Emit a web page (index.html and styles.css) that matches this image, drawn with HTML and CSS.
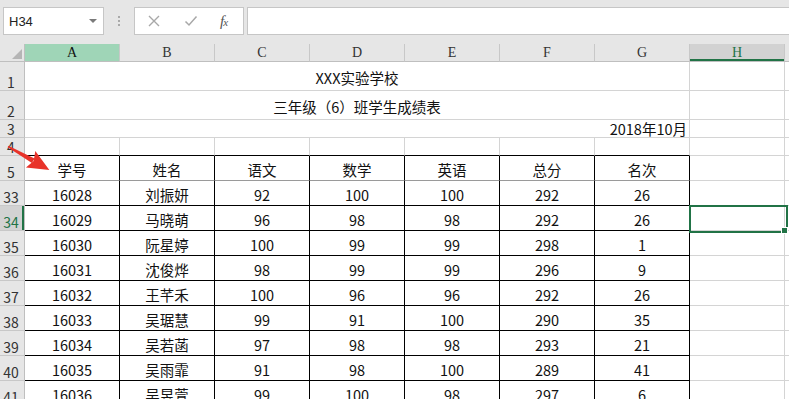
FILE: index.html
```html
<!DOCTYPE html>
<html lang="zh-CN">
<head>
<meta charset="utf-8">
<title>成绩表</title>
<link rel="stylesheet" href="styles.css">
</head>
<body>
<div class="app">
  <header class="bar">
    <div class="namebox"><span class="ref">H34</span><span class="dd"></span></div>
    <div class="grip"><i></i><i></i><i></i></div>
    <div class="btns">
      <svg class="ico" width="14" height="14" viewBox="0 0 14 14"><path d="M2 2 L12 12 M12 2 L2 12" stroke="#a8a8a8" stroke-width="1.4" fill="none"/></svg>
      <svg class="ico" width="14" height="14" viewBox="0 0 14 14"><path d="M1.5 7.5 L5 11 L12.5 2.5" stroke="#a8a8a8" stroke-width="1.5" fill="none"/></svg>
      <span class="fx">f<span class="fxs">x</span></span>
    </div>
    <div class="formula"></div>
  </header>

  <div class="sheet">
    <div class="corner"><i class="tri"></i></div>
    <div class="ch cha">A</div><div class="ch">B</div><div class="ch">C</div><div class="ch">D</div><div class="ch">E</div><div class="ch">F</div><div class="ch">G</div><div class="ch act">H</div><div class="ch last"></div>

    <div class="rh">1</div><div class="c m ttl">XXX实验学校</div><div class="c"></div><div class="c last"></div>
    <div class="rh">2</div><div class="c m ttl">三年级（6）班学生成绩表</div><div class="c"></div><div class="c last"></div>
    <div class="rh">3</div><div class="c m date">2018年10月</div><div class="c"></div><div class="c last"></div>

    <div class="rh">4</div><div class="c r4"></div><div class="c r4"></div><div class="c r4"></div><div class="c r4"></div><div class="c r4"></div><div class="c r4"></div><div class="c r4"></div><div class="c"></div><div class="c last"></div>

    <div class="rh">5</div><div class="c t hd">学号</div><div class="c t hd">姓名</div><div class="c t hd">语文</div><div class="c t hd">数学</div><div class="c t hd">英语</div><div class="c t hd">总分</div><div class="c t hd">名次</div><div class="c"></div><div class="c last"></div>

    <div class="rh">33</div><div class="c t">16028</div><div class="c t">刘振妍</div><div class="c t">92</div><div class="c t">100</div><div class="c t">100</div><div class="c t">292</div><div class="c t">26</div><div class="c"></div><div class="c last"></div>
    <div class="rh act">34</div><div class="c t">16029</div><div class="c t">马晓萌</div><div class="c t">96</div><div class="c t">98</div><div class="c t">98</div><div class="c t">292</div><div class="c t">26</div><div class="c selc"><div class="selbox"></div><div class="handle"></div></div><div class="c last"></div>
    <div class="rh">35</div><div class="c t">16030</div><div class="c t">阮星婷</div><div class="c t">100</div><div class="c t">99</div><div class="c t">99</div><div class="c t">298</div><div class="c t">1</div><div class="c"></div><div class="c last"></div>
    <div class="rh">36</div><div class="c t">16031</div><div class="c t">沈俊烨</div><div class="c t">98</div><div class="c t">99</div><div class="c t">99</div><div class="c t">296</div><div class="c t">9</div><div class="c"></div><div class="c last"></div>
    <div class="rh">37</div><div class="c t">16032</div><div class="c t">王芊禾</div><div class="c t">100</div><div class="c t">96</div><div class="c t">96</div><div class="c t">292</div><div class="c t">26</div><div class="c"></div><div class="c last"></div>
    <div class="rh">38</div><div class="c t">16033</div><div class="c t">吴琚慧</div><div class="c t">99</div><div class="c t">91</div><div class="c t">100</div><div class="c t">290</div><div class="c t">35</div><div class="c"></div><div class="c last"></div>
    <div class="rh">39</div><div class="c t">16034</div><div class="c t">吴若菡</div><div class="c t">97</div><div class="c t">98</div><div class="c t">98</div><div class="c t">293</div><div class="c t">21</div><div class="c"></div><div class="c last"></div>
    <div class="rh">40</div><div class="c t">16035</div><div class="c t">吴雨霏</div><div class="c t">91</div><div class="c t">98</div><div class="c t">100</div><div class="c t">289</div><div class="c t">41</div><div class="c"></div><div class="c last"></div>
    <div class="rh">41</div><div class="c t">16036</div><div class="c t">吴昱萱</div><div class="c t">99</div><div class="c t">100</div><div class="c t">98</div><div class="c t">297</div><div class="c t">6</div><div class="c"></div><div class="c last"></div>
  </div>

  <svg class="arrow" width="789" height="399" viewBox="0 0 789 399">
    <g transform="translate(8 146.5) rotate(29.5)">
      <polygon points="0,-0.8 29,-2.6 29,2.6 0,0.8" fill="#e8332a"/>
      <polygon points="26,-9.5 47.5,0 26,9.5 29.5,0" fill="#e8332a"/>
    </g>
  </svg>
</div>
</body>
</html>
```

FILE: styles.css
```css
html, body {
  margin: 0;
  padding: 0;
}
body {
  width: 789px;
  height: 399px;
  overflow: hidden;
  background: #ffffff;
  font-family: "Noto Sans CJK SC", "Noto Sans", sans-serif;
}
.app {
  position: relative;
  width: 789px;
  height: 399px;
  overflow: hidden;
}

/* ---------- formula bar ---------- */
.bar {
  height: 44px;
  box-sizing: border-box;
  padding-top: 7px;
  background: #e6e6e6;
  display: flex;
  align-items: flex-start;
}
.namebox {
  margin-left: 3px;
  width: 101px;
  height: 28px;
  box-sizing: border-box;
  background: #ffffff;
  border: 1px solid #c6c6c6;
  display: flex;
  align-items: center;
  justify-content: space-between;
  padding: 0 6px 0 5px;
  font: 13px "Liberation Sans", Arial, sans-serif;
  color: #222222;
}
.dd {
  width: 0;
  height: 0;
  border-left: 4px solid transparent;
  border-right: 4px solid transparent;
  border-top: 4px solid #7a7a7a;
}
.grip {
  margin-left: 14px;
  padding-top: 9px;
  width: 2px;
  display: flex;
  flex-direction: column;
  gap: 2px;
}
.grip i {
  display: block;
  width: 2px;
  height: 2px;
  background: #a9a9a9;
}
.btns {
  margin-left: 14px;
  width: 110px;
  height: 28px;
  box-sizing: border-box;
  background: #ffffff;
  border: 1px solid #c6c6c6;
  display: flex;
  align-items: center;
  padding-left: 12px;
  gap: 23px;
}
.ico {
  display: block;
}
.fx {
  font: italic 15px "Liberation Serif", serif;
  color: #555555;
  margin-left: -1px;
  letter-spacing: -1px;
}
.fxs {
  font-size: 11px;
}
.formula {
  margin-left: 3px;
  flex: 1;
  height: 28px;
  box-sizing: border-box;
  background: #ffffff;
  border: 1px solid #c6c6c6;
  border-right: none;
}

/* ---------- sheet grid ---------- */
.sheet {
  display: grid;
  grid-template-columns: 25px repeat(8, 95px) 1fr;
  grid-template-rows: 18px 29px 29px 18px 18px 25px repeat(9, 25px);
}
.sheet > div {
  box-sizing: border-box;
  min-width: 0;
}
.corner {
  position: relative;
  background: #e6e6e6;
  border-right: 1px solid #bfbfbf;
  border-bottom: 1px solid #bfbfbf;
}
.tri {
  position: absolute;
  right: 2px;
  bottom: 2px;
  width: 10px;
  height: 10px;
  background: #b5b5b5;
  clip-path: polygon(100% 0, 100% 100%, 0 100%);
}
.ch {
  background: #e6e6e6;
  border-right: 1px solid #c8c8c8;
  border-bottom: 1px solid #bfbfbf;
  display: flex;
  align-items: center;
  justify-content: center;
  font: 14px "Liberation Serif", serif;
  color: #333333;
}
.ch.cha {
  background: #9fd5b7;
  color: #111111;
}
.ch.act {
  background: #d2d2d2;
  color: #217346;
  box-shadow: inset 0 -2px 0 #217346;
}
.ch.last {
  border-right: none;
}
.rh {
  background: #e6e6e6;
  border-right: 1px solid #bfbfbf;
  border-bottom: 1px solid #c8c8c8;
  display: flex;
  align-items: flex-end;
  justify-content: center;
  padding-right: 2px;
  padding-bottom: 1px;
  font-size: 14px;
  line-height: 14px;
  color: #333333;
}
.rh.act {
  background: #d2d2d2;
  color: #217346;
  box-shadow: inset -2px 0 0 #217346;
}

.c {
  border-right: 1px solid #d4d4d4;
  border-bottom: 1px solid #d4d4d4;
  display: flex;
  align-items: center;
  justify-content: center;
  padding-top: 3px;
  font-size: 14.5px;
  line-height: 18px;
  color: #111111;
  white-space: nowrap;
}
.c.last {
  border-right: none;
}
.c.m {
  grid-column: span 7;
}
.c.date {
  justify-content: flex-end;
  padding-right: 2px;
  padding-top: 1px;
}
.c.r4 {
  border-bottom-color: #000000;
}
.c.t {
  border-right-color: #000000;
  border-bottom-color: #000000;
}
.c.t.hd {
  border-bottom-color: #9a9a9a;
}

/* ---------- selection ---------- */
.c.selc {
  position: relative;
}
.selbox {
  position: absolute;
  left: -1px;
  top: -1px;
  width: 99px;
  height: 28px;
  box-sizing: border-box;
  border: 2px solid #217346;
}
.handle {
  position: absolute;
  left: 91px;
  top: 21px;
  width: 5px;
  height: 5px;
  background: #217346;
  border: 1px solid #ffffff;
}

/* ---------- annotation arrow ---------- */
.arrow {
  position: absolute;
  left: 0;
  top: 0;
  pointer-events: none;
}
```
